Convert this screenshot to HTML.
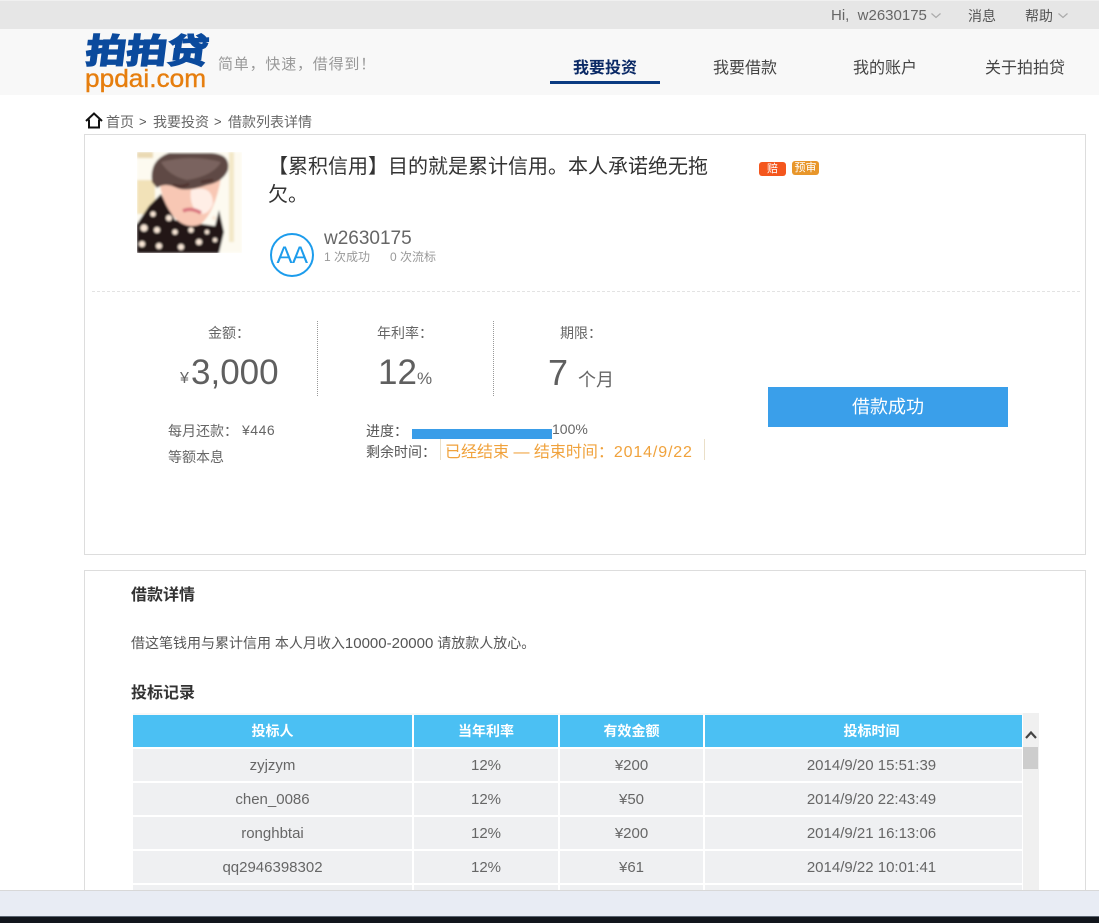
<!DOCTYPE html>
<html lang="zh"><head><meta charset="utf-8"><title>ppdai</title>
<style>
html,body{margin:0;padding:0;background:#fff}
#p{position:relative;width:1099px;height:923px;overflow:hidden;font-family:"Liberation Sans","Noto Sans CJK SC",sans-serif;color:#555;font-size:14px}
#p div{position:absolute;white-space:nowrap}
.t{line-height:20px}
.c{text-align:center}
.k{font-family:"Noto Sans CJK TC",sans-serif}
.cell{background:#eff0f2;height:32px;line-height:33px;text-align:center;font-size:15px;color:#666}
.th{background:#4bc0f3;height:32px;line-height:32px;text-align:center;font-size:14px;font-weight:bold;color:#fff}
.r{box-sizing:border-box;padding-left:16px}
</style></head><body><div id="p">
<div style="left:0;top:0;width:1099px;height:29px;background:#e6e6e6;border-top:1px solid #f0f0f0;box-sizing:border-box"></div>
<div style="left:0;top:29px;width:1099px;height:66px;background:#f8f8f8"></div>
<div class="t" style="left:831px;top:6px;font-size:15px;color:#666">Hi,&nbsp; w2630175</div>
<div class="t" style="left:968px;top:6px;font-size:14px;color:#555">消息</div>
<div class="t" style="left:1025px;top:6px;font-size:14px;color:#555">帮助</div>
<svg style="position:absolute;left:930px;top:12px" width="12" height="8"><path d="M1.5 1.5L6 5.5L10.5 1.5" fill="none" stroke="#aaa" stroke-width="1.2"/></svg>
<svg style="position:absolute;left:1057px;top:12px" width="12" height="8"><path d="M1.5 1.5L6 5.5L10.5 1.5" fill="none" stroke="#aaa" stroke-width="1.2"/></svg>

<div style="left:88px;top:34px;height:36px;line-height:36px;font-size:34px;font-weight:bold;color:#0b4a9d;-webkit-text-stroke:1.6px #0b4a9d;transform-origin:0 0;transform:scaleX(1.2) skewX(-6deg)">拍拍贷</div>
<div style="left:85px;top:66px;line-height:26px;font-size:25px;color:#e67e0e;-webkit-text-stroke:.4px #e67e0e;transform-origin:0 0;transform:scaleX(1.05)">ppdai.com</div>
<div style="left:218px;top:55px;line-height:20px;font-size:15px;color:#999;letter-spacing:.8px">简单，快速，借得到！</div>

<div class="t c" style="left:550px;top:59px;width:110px;font-size:16px;font-weight:bold;color:#0b2a66">我要投资</div>
<div style="left:550px;top:81px;width:110px;height:3px;background:#0b3b82"></div>
<div class="t" style="left:713px;top:59px;font-size:16px;color:#444">我要借款</div>
<div class="t" style="left:853px;top:59px;font-size:16px;color:#444">我的账户</div>
<div class="t" style="left:985px;top:59px;font-size:16px;color:#444">关于拍拍贷</div>

<svg style="position:absolute;left:85px;top:112px" width="18" height="17"><path d="M1 9L9 1.5L17 9M4 7.5V15.5H14V7.5" fill="none" stroke="#111" stroke-width="2"/></svg>
<div class="t" style="left:106px;top:112px;font-size:14px;color:#666">首页</div>
<div class="t" style="left:139px;top:112px;font-size:13px;color:#555">&gt;</div>
<div class="t" style="left:153px;top:112px;font-size:14px;color:#666">我要投资</div>
<div class="t" style="left:214px;top:112px;font-size:13px;color:#555">&gt;</div>
<div class="t" style="left:228px;top:112px;font-size:14px;color:#666">借款列表详情</div>

<div style="left:84px;top:134px;width:1000px;height:419px;border:1px solid #ddd"></div>

<svg style="position:absolute;left:137px;top:152px" width="105" height="101" viewBox="0 0 105 101">
<defs><filter id="b"><feGaussianBlur stdDeviation="1"/></filter></defs>
<g filter="url(#b)">
<rect width="105" height="101" fill="#fdfaf0"/>
<rect x="0" y="0" width="16" height="6" fill="#ead9b4"/>
<rect x="0" y="28" width="18" height="34" fill="#f2e2b8"/>
<rect x="92" y="0" width="5" height="90" fill="#f3e8c8"/>
<path d="M0 72L12 54L24 42L38 68L78 74L82 58L87 80L82 101H0Z" fill="#221719"/>
<path d="M22 26Q24 50 38 66Q50 78 64 72Q78 60 84 26Z" fill="#f8c7b4"/>
<path d="M54 38Q76 32 76 52Q70 66 60 60Q52 52 54 38Z" fill="#ffeee6"/>
<path d="M15 30Q12 8 32 1H74Q94 2 91 18Q86 30 70 33Q50 40 40 36Q28 30 20 36Z" fill="#5f4844"/>
<path d="M24 10Q54 2 84 10Q76 24 50 28Q32 24 24 10Z" fill="#7a645f"/>
<path d="M36 33Q44 36 52 32M64 30L76 28" stroke="#4e2e2a" stroke-width="2.4" fill="none"/>
<path d="M46 59Q54 55 64 61" stroke="#d9757f" stroke-width="3.5" fill="none"/>
<g fill="#fbe8d8"><circle cx="16" cy="62" r="2.6"/><circle cx="7" cy="76" r="3.5"/><circle cx="20" cy="78" r="3"/><circle cx="32" cy="66" r="3"/><circle cx="5" cy="92" r="3"/><circle cx="22" cy="94" r="3"/><circle cx="38" cy="80" r="2.6"/><circle cx="44" cy="95" r="3"/><circle cx="54" cy="78" r="2.6"/><circle cx="62" cy="90" r="3"/><circle cx="70" cy="80" r="2.2"/><circle cx="77" cy="66" r="2.2"/><circle cx="78" cy="88" r="2.2"/></g>
</g></svg>

<div style="left:268px;top:153px;width:460px;line-height:28px;font-size:20px;color:#333;white-space:normal">【累积信用】目的就是累计信用。本人承诺绝无拖<br>欠。</div>
<div style="left:759px;top:162px;width:27px;height:14px;line-height:14px;background:#f4561d;border-radius:3px;color:#fff;font-size:11px;text-align:center">赔</div>
<div style="left:792px;top:161px;width:27px;height:14px;line-height:14px;background:#e8962a;border-radius:3px;color:#fff;font-size:11px;text-align:center">预审</div>

<div style="left:270px;top:233px;width:40px;height:40px;border:2px solid #1c9cec;border-radius:50%;line-height:41px;text-align:center;font-size:24px;color:#1c9cec;letter-spacing:-.5px">AA</div>
<div class="t" style="left:324px;top:229px;font-size:19px;color:#666">w2630175</div>
<div class="t" style="left:324px;top:247px;font-size:12px;color:#999">1 次成功</div>
<div class="t" style="left:390px;top:247px;font-size:12px;color:#999">0 次流标</div>

<div style="left:92px;top:291px;width:988px;border-top:1px dashed #e3e3e3"></div>

<div class="t" style="left:208px;top:323px;font-size:14px;color:#666">金额<span class="k">：</span></div>
<div class="t" style="left:377px;top:323px;font-size:14px;color:#666">年利率<span class="k">：</span></div>
<div class="t" style="left:560px;top:323px;font-size:14px;color:#666">期限<span class="k">：</span></div>
<div style="left:317px;top:321px;height:75px;border-left:1px dotted #999"></div>
<div style="left:493px;top:321px;height:75px;border-left:1px dotted #999"></div>

<div style="left:180px;top:371px;line-height:16px;font-size:16px;color:#666">¥</div>
<div style="left:191px;top:352px;line-height:42px;font-size:35px;color:#5f5f5f">3,000</div>
<div style="left:378px;top:352px;line-height:42px;font-size:35px;color:#5f5f5f">12</div>
<div style="left:417px;top:369px;line-height:20px;font-size:17px;color:#666">%</div>
<div style="left:548px;top:352px;line-height:42px;font-size:36px;color:#5f5f5f">7</div>
<div style="left:578px;top:369px;line-height:22px;font-size:18px;color:#666">个月</div>

<div class="t" style="left:168px;top:421px;font-size:14px;color:#666">每月还款<span class="k">：</span></div>
<div class="t" style="left:242px;top:420px;font-size:14px;color:#666;letter-spacing:.5px">¥446</div>
<div class="t" style="left:168px;top:447px;font-size:14px;color:#666">等额本息</div>
<div class="t" style="left:366px;top:421px;font-size:14px;color:#555">进度<span class="k">：</span></div>
<div style="left:412px;top:429px;width:140px;height:10px;background:#3a9de8"></div>
<div class="t" style="left:552px;top:419px;font-size:14px;color:#666">100%</div>
<div class="t" style="left:366px;top:442px;font-size:14px;color:#555">剩余时间<span class="k">：</span></div>
<div style="left:440px;top:439px;width:263px;height:21px;border-left:1px solid #eadfc8;border-right:1px solid #eadfc8"></div>
<div class="t" style="left:445px;top:440px;font-size:16px;color:#f0a23c">已经结束 — 结束时间<span class="k">：</span><span style="letter-spacing:.85px">2014/9/22</span></div>

<div style="left:768px;top:387px;width:240px;height:40px;line-height:41px;background:#3a9fea;color:#fff;font-size:18px;text-align:center">借款成功</div>

<div style="left:84px;top:570px;width:1000px;height:340px;border:1px solid #ddd"></div>
<div class="t" style="left:131px;top:586px;font-size:16px;font-weight:bold;color:#333">借款详情</div>
<div class="t" style="left:131px;top:633px;font-size:14px;color:#555">借这笔钱用与累计信用 本人月收入<span style="font-size:15px">10000-20000</span> 请放款人放心。</div>
<div class="t" style="left:131px;top:684px;font-size:16px;font-weight:bold;color:#333">投标记录</div>

<div style="left:1023px;top:713px;width:16px;height:180px;background:#f0f0f0"></div>
<div style="left:133px;top:713px;width:890px;height:2px;background:#f8f8f8"></div>
<svg style="position:absolute;left:1024px;top:729px" width="14" height="12"><path d="M2 9L7 3.5L12 9" fill="none" stroke="#444" stroke-width="2.2"/></svg>
<div style="left:1023px;top:747px;width:15px;height:22px;background:#cdcdcd"></div>

<div class="th" style="left:133px;top:715px;width:279px">投标人</div>
<div class="th" style="left:414px;top:715px;width:144px">当年利率</div>
<div class="th" style="left:560px;top:715px;width:143px">有效金额</div>
<div class="th r" style="left:705px;top:715px;width:317px">投标时间</div>

<div class="cell" style="left:133px;top:749px;width:279px">zyjzym</div>
<div class="cell" style="left:414px;top:749px;width:144px">12%</div>
<div class="cell" style="left:560px;top:749px;width:143px">¥200</div>
<div class="cell r" style="left:705px;top:749px;width:317px">2014/9/20 15:51:39</div>

<div class="cell" style="left:133px;top:783px;width:279px">chen_0086</div>
<div class="cell" style="left:414px;top:783px;width:144px">12%</div>
<div class="cell" style="left:560px;top:783px;width:143px">¥50</div>
<div class="cell r" style="left:705px;top:783px;width:317px">2014/9/20 22:43:49</div>

<div class="cell" style="left:133px;top:817px;width:279px">ronghbtai</div>
<div class="cell" style="left:414px;top:817px;width:144px">12%</div>
<div class="cell" style="left:560px;top:817px;width:143px">¥200</div>
<div class="cell r" style="left:705px;top:817px;width:317px">2014/9/21 16:13:06</div>

<div class="cell" style="left:133px;top:851px;width:279px">qq2946398302</div>
<div class="cell" style="left:414px;top:851px;width:144px">12%</div>
<div class="cell" style="left:560px;top:851px;width:143px">¥61</div>
<div class="cell r" style="left:705px;top:851px;width:317px">2014/9/22 10:01:41</div>

<div class="cell" style="left:133px;top:885px;width:279px"></div>
<div class="cell" style="left:414px;top:885px;width:144px"></div>
<div class="cell" style="left:560px;top:885px;width:143px"></div>
<div class="cell" style="left:705px;top:885px;width:317px"></div>

<div style="left:0;top:890px;width:1099px;height:26px;background:#e8ecf4;border-top:1px solid #d8d8d8;box-sizing:border-box"></div>
<div style="left:0;top:916px;width:1099px;height:7px;background:#11151c;border-top:1px solid #5a6470;box-sizing:border-box"></div>
</div></body></html>
